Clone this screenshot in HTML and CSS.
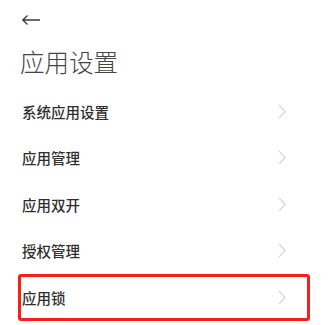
FILE: index.html
```html
<!doctype html>
<html lang="zh-CN">
  <head>
    <meta charset="UTF-8" />
    <meta name="viewport" content="width=device-width, initial-scale=1.0" />
    <title>应用设置</title>
    <link rel="stylesheet" href="styles.css">
  </head>
  <body>
    <div class="page">
      <div class="topbar">
        <svg class="back" width="20" height="12" viewBox="0 0 20 12">
          <path d="M1.5 6 H19 M6.5 1.5 L1.8 6 L6.5 10.5" fill="none" stroke="#3a3a3a" stroke-width="1.3" />
        </svg>
      </div>
      <h1 class="title">应用设置</h1>

      <div class="menu">
        <div class="menu-item">
          <span>系统应用设置</span>
          <svg class="chevron" width="8" height="15" viewBox="0 0 8 15"><path d="M1 1 L7 7.5 L1 14" /></svg>
        </div>
        <div class="menu-item">
          <span>应用管理</span>
          <svg class="chevron" width="8" height="15" viewBox="0 0 8 15"><path d="M1 1 L7 7.5 L1 14" /></svg>
        </div>
        <div class="menu-item">
          <span>应用双开</span>
          <svg class="chevron" width="8" height="15" viewBox="0 0 8 15"><path d="M1 1 L7 7.5 L1 14" /></svg>
        </div>
        <div class="menu-item">
          <span>授权管理</span>
          <svg class="chevron" width="8" height="15" viewBox="0 0 8 15"><path d="M1 1 L7 7.5 L1 14" /></svg>
        </div>
        <div class="menu-item marked">
          <span>应用锁</span>
          <svg class="chevron" width="8" height="15" viewBox="0 0 8 15"><path d="M1 1 L7 7.5 L1 14" /></svg>
        </div>
      </div>
    </div>
  </body>
</html>
```

FILE: styles.css
```css
body {
  margin: 0;
  background-color: #fff;
  font-family: "Noto Sans CJK SC", "Noto Sans", sans-serif;
  color: #333;
}
.page {
  width: 334px;
  height: 325px;
  overflow: hidden;
}
.topbar {
  height: 40px;
  display: flex;
  align-items: center;
  padding-left: 21px;
}
.back {
  display: block;
}
.title {
  margin: 0;
  padding-left: 20px;
  height: 48px;
  line-height: 44px;
  font-size: 24.5px;
  font-weight: 300;
  color: #454545;
}
.menu {
  padding-left: 18px;
}
.menu-item {
  width: 292px;
  height: 46.5px;
  box-sizing: border-box;
  padding: 0 24px 0 4px;
  display: flex;
  align-items: center;
  justify-content: space-between;
  font-size: 14.5px;
  font-weight: 500;
  color: #2e2e2e;
}
.chevron {
  display: block;
  fill: none;
  stroke: #cacaca;
  stroke-width: 1.1;
}
.menu-item.marked {
  border-radius: 3px;
  box-shadow: inset 0 0 0 3px #f5201a;
}
```
